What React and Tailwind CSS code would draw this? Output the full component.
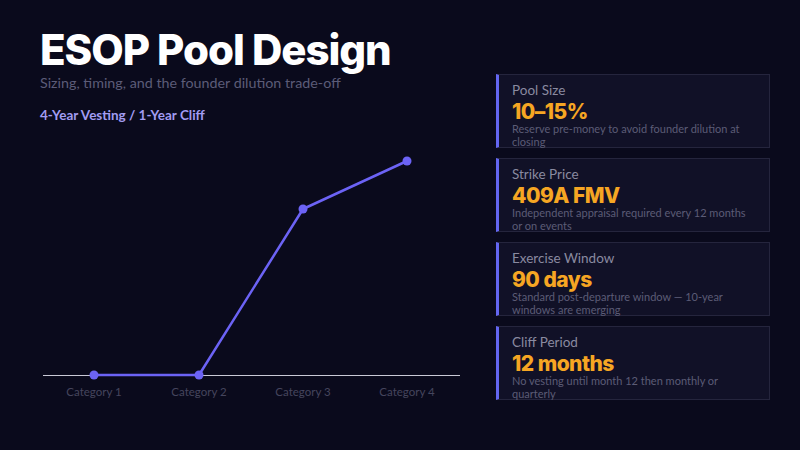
import React from 'react';

const cards = [
  { label: 'Pool Size', value: '10–15%', desc: 'Reserve pre-money to avoid founder dilution at closing' },
  { label: 'Strike Price', value: '409A FMV', desc: 'Independent appraisal required every 12 months or on events' },
  { label: 'Exercise Window', value: '90 days', desc: 'Standard post-departure window — 10-year windows are emerging' },
  { label: 'Cliff Period', value: '12 months', desc: 'No vesting until month 12 then monthly or quarterly' },
];

const points = [
  { x: 54, y: 238, name: 'Category 1' },
  { x: 159, y: 238, name: 'Category 2' },
  { x: 263, y: 72, name: 'Category 3' },
  { x: 367, y: 24, name: 'Category 4' },
];

const Chart = () => {
  const line = points.map((p) => `${p.x},${p.y}`).join(' ');
  return (
    <svg width="420" height="275" viewBox="0 0 420 275" className="block">
      <line x1="3" y1="238.5" x2="420" y2="238.5" stroke="#c9c9d6" strokeWidth="1" />
      <polyline points={line} fill="none" stroke="#6c63f5" strokeWidth="2.5" strokeLinejoin="round" />
      {points.map((p) => (
        <circle key={p.name} cx={p.x} cy={p.y} r="4.5" fill="#6c63f5" />
      ))}
      {points.map((p) => (
        <text
          key={p.name + 't'}
          x={p.x}
          y="259"
          textAnchor="middle"
          fontSize="11.5"
          fill="#45455d"
          style={{ fontFamily: 'Lato, sans-serif' }}
        >
          {p.name}
        </text>
      ))}
    </svg>
  );
};

const StatCard = ({ data }) => (
  <div className="h-[74px] border border-[#25253d] border-l-[3px] border-l-[#6366f1] bg-[#111127] pl-[13px] pr-3 pt-[7px]">
    <div className="text-[13.5px] leading-[16px] text-[#8a8aa0]">{data.label}</div>
    <div className="mt-[3px] text-[21px] leading-[21px] font-extrabold text-[#f6a623] font-['Inter',sans-serif] tracking-tight">
      {data.value}
    </div>
    <div className="text-[11px] leading-[13px] text-[#5c5c76]">{data.desc}</div>
  </div>
);

export default function App() {
  return (
    <div className="w-[800px] h-[450px] bg-[#0a0a1c] flex pl-10 pr-[30px] font-['Lato',sans-serif] overflow-hidden">
      <div className="w-[420px] shrink-0 pt-[26px]">
        <h1 className="text-[42px] leading-[48px] font-extrabold text-white tracking-tight font-['Inter',sans-serif]">
          ESOP Pool Design
        </h1>
        <p className="text-[14.3px] leading-[18px] text-[#5c5c78]">
          Sizing, timing, and the founder dilution trade-off
        </p>
        <p className="mt-[15px] text-[13.5px] leading-[16px] font-bold text-[#a29cf2]">
          4-Year Vesting / 1-Year Cliff
        </p>
        <div className="mt-[14px]">
          <Chart />
        </div>
      </div>
      <div className="ml-[36px] w-[274px] shrink-0 pt-[74px] flex flex-col gap-[10px]">
        {cards.map((c) => (
          <StatCard key={c.label} data={c} />
        ))}
      </div>
    </div>
  );
}
